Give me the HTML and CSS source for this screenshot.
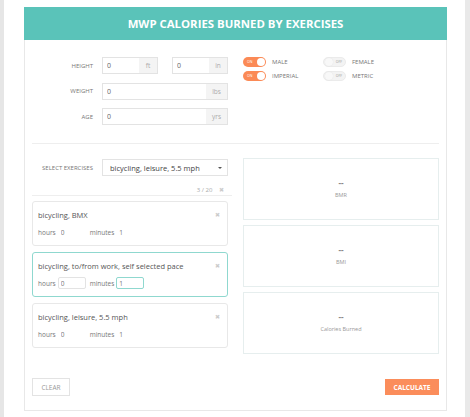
FILE: index.html
```html
<!DOCTYPE html>
<html lang="en">
<head>
  <meta charset="UTF-8">
  <meta name="viewport" content="width=device-width, initial-scale=1.0">
  <title>MWP Calories Burned by Exercises</title>
  <link rel="stylesheet" href="styles.css">
</head>
<body>
  <div class="edge-left"></div>
  <div class="main">
    <div class="calc">
      <header class="calc-header">
        <h1>MWP Calories Burned by Exercises</h1>
      </header>

      <div class="calc-body">
        <div class="top-section">
          <div class="measures">
            <div class="form-row">
              <label>Height</label>
              <div class="input-group short">
                <input type="text" value="0">
                <span class="addon">ft</span>
              </div>
              <div class="input-group short">
                <input type="text" value="0">
                <span class="addon">in</span>
              </div>
            </div>
            <div class="form-row">
              <label>Weight</label>
              <div class="input-group wide">
                <input type="text" value="0">
                <span class="addon">lbs</span>
              </div>
            </div>
            <div class="form-row">
              <label>Age</label>
              <div class="input-group wide">
                <input type="text" value="0">
                <span class="addon">yrs</span>
              </div>
            </div>
          </div>

          <div class="switches">
            <div class="switch-row">
              <div class="switch-item">
                <span class="toggle on"><span class="toggle-text">ON</span><span class="knob"></span></span>
                <span class="switch-label">Male</span>
              </div>
              <div class="switch-item">
                <span class="toggle off"><span class="knob"></span><span class="toggle-text">OFF</span></span>
                <span class="switch-label">Female</span>
              </div>
            </div>
            <div class="switch-row">
              <div class="switch-item">
                <span class="toggle on"><span class="toggle-text">ON</span><span class="knob"></span></span>
                <span class="switch-label">Imperial</span>
              </div>
              <div class="switch-item">
                <span class="toggle off"><span class="knob"></span><span class="toggle-text">OFF</span></span>
                <span class="switch-label">Metric</span>
              </div>
            </div>
          </div>
        </div>

        <div class="lower-section">
          <div class="exercises">
            <div class="form-row">
              <label>Select Exercises</label>
              <div class="select-box">
                <span>bicycling, leisure, 5.5 mph</span>
                <span class="caret"></span>
              </div>
            </div>
            <div class="count-row">3 / 20 <span class="remove">&#10006;</span></div>

            <div id="exercise-list" class="exercise-list"></div>
          </div>

          <div class="results">
            <div class="result-box">
              <div class="result-value">--</div>
              <div class="result-label">BMR</div>
            </div>
            <div class="result-box">
              <div class="result-value">--</div>
              <div class="result-label">BMI</div>
            </div>
            <div class="result-box">
              <div class="result-value">--</div>
              <div class="result-label">Calories Burned</div>
            </div>
          </div>
        </div>

        <div class="calc-footer">
          <button class="btn-clear">Clear</button>
          <button class="btn-calc">Calculate</button>
        </div>
      </div>
    </div>
  </div>
  <div class="edge-right"></div>

  <script>
    const exercises = [
      { name: "bicycling, BMX", hours: 0, minutes: 1 },
      { name: "bicycling, to/from work, self selected pace", hours: 0, minutes: 1, editing: true },
      { name: "bicycling, leisure, 5.5 mph", hours: 0, minutes: 1 }
    ];

    function renderExercises() {
      const list = document.getElementById('exercise-list');
      list.innerHTML = '';
      exercises.forEach(ex => {
        const item = document.createElement('div');
        item.className = 'exercise-item' + (ex.editing ? ' active' : '');
        item.innerHTML = `
          <div class="exercise-title">${ex.name}<span class="remove">&#10006;</span></div>
          <div class="exercise-time">
            <span>hours</span>
            <input type="text" class="time-input" value="${ex.hours}">
            <span>minutes</span>
            <input type="text" class="time-input${ex.editing ? ' focus' : ''}" value="${ex.minutes}">
          </div>
        `;
        list.appendChild(item);
      });
    }

    renderExercises();
  </script>
</body>
</html>
```

FILE: styles.css
```css
body {
  font-family: "Open Sans", Arial, sans-serif;
  background-color: #fff;
  margin: 0;
  padding: 0;
  display: flex;
  min-height: 100vh;
  color: #666;
}

.edge-left {
  width: 4px;
  background-color: #e6e6e6;
}

.edge-right {
  width: 5px;
  background-color: #e9e9e9;
}

.main {
  flex: 1;
  padding: 7px 18px 0 20px;
}

.calc {
  border: 1px solid #e8e8e8;
  border-top: none;
}

.calc-header {
  background-color: #5ac3b9;
  height: 33px;
  margin: 0 -1px;
  display: flex;
  align-items: center;
  justify-content: center;
}

.calc-header h1 {
  margin: 0;
  color: #fff;
  font-size: 11.4px;
  font-weight: 700;
  text-transform: uppercase;
}

.calc-body {
  padding: 17px 7px 14px 7px;
}

.top-section,
.lower-section {
  display: grid;
  grid-template-columns: 200px 1fr;
  column-gap: 11px;
}

.top-section {
  padding-bottom: 18px;
  border-bottom: 1px solid #eee;
}

.measures {
  display: flex;
  flex-direction: column;
  gap: 8.5px;
}

.form-row {
  display: flex;
  align-items: center;
  height: 17px;
}

.form-row label {
  flex-shrink: 0;
  box-sizing: border-box;
  width: 70px;
  padding-right: 9px;
  text-align: right;
  font-size: 6px;
  text-transform: uppercase;
  color: #777;
}

.input-group {
  display: flex;
  flex-shrink: 0;
  height: 17px;
  border: 1px solid #e3e3e3;
  box-sizing: border-box;
}

.input-group.short {
  width: 56px;
}

.input-group.short + .input-group.short {
  margin-left: 14px;
}

.input-group.wide {
  width: 126px;
}

.input-group input {
  flex: 1;
  min-width: 0;
  border: none;
  outline: none;
  padding: 0 4px;
  font-family: inherit;
  font-size: 7px;
  color: #666;
}

.input-group .addon {
  width: 18px;
  background-color: #f4f4f4;
  font-size: 6.5px;
  color: #aaa;
  display: flex;
  align-items: center;
  justify-content: center;
}

.input-group.wide .addon {
  width: 21px;
}

.switches {
  display: flex;
  flex-direction: column;
  gap: 4px;
}

.switch-row {
  display: flex;
}

.switch-item {
  width: 80px;
  display: flex;
  align-items: center;
  gap: 6px;
}

.toggle {
  width: 23px;
  height: 10px;
  border-radius: 5px;
  box-sizing: border-box;
  display: flex;
  align-items: center;
  justify-content: space-between;
  padding: 0 1px;
}

.toggle.on {
  background-color: #fb8a56;
  padding-left: 4px;
}

.toggle.off {
  background-color: #f3f3f3;
  border: 1px solid #ebebeb;
  padding-right: 3px;
}

.knob {
  width: 8px;
  height: 8px;
  border-radius: 50%;
  background-color: #fff;
}

.toggle.off .knob {
  background-color: #f8f8f8;
  box-shadow: 0 0 1px #ddd;
}

.toggle-text {
  font-size: 3.5px;
  color: #fff;
  line-height: 1;
}

.toggle.off .toggle-text {
  color: #999;
}

.switch-label {
  font-size: 6px;
  text-transform: uppercase;
  color: #777;
}

.lower-section {
  padding-top: 14px;
}

.exercises .form-row {
  margin-top: 1px;
}

.select-box {
  flex-shrink: 0;
  width: 126px;
  height: 17px;
  box-sizing: border-box;
  border: 1px solid #e3e3e3;
  display: flex;
  align-items: center;
  justify-content: space-between;
  padding: 0 5px 0 7px;
  font-size: 7.5px;
  color: #444;
}

.caret {
  width: 0;
  height: 0;
  border-left: 2px solid transparent;
  border-right: 2px solid transparent;
  border-top: 2.5px solid #555;
}

.count-row {
  margin-top: 10px;
  height: 9px;
  line-height: 9px;
  border-bottom: 1px solid #eee;
  text-align: right;
  padding-right: 8px;
  font-size: 6px;
  color: #aaa;
}

.count-row .remove {
  margin-left: 5px;
}

.remove {
  font-size: 6px;
  color: #ccc;
}

.exercise-list {
  margin-top: 5px;
  width: 196px;
  display: flex;
  flex-direction: column;
  gap: 6px;
}

.exercise-item {
  border: 1px solid #e8e8e8;
  border-radius: 3px;
  padding: 7px 5px;
}

.exercise-item.active {
  border-color: #8fd8cf;
}

.exercise-title {
  display: flex;
  justify-content: space-between;
  align-items: center;
  height: 11px;
  font-size: 7.5px;
  color: #555;
  padding-right: 2px;
}

.exercise-time {
  margin-top: 6px;
  display: flex;
  align-items: center;
  height: 12px;
  font-size: 6.5px;
  color: #777;
}

.time-input {
  width: 28px;
  height: 12px;
  box-sizing: border-box;
  border: 1px solid transparent;
  border-radius: 2px;
  padding: 0 2px;
  margin: 0 4px 0 2px;
  font-family: inherit;
  font-size: 6.5px;
  color: #777;
  outline: none;
  background: transparent;
}

.exercise-item.active .time-input {
  border-color: #e3e3e3;
}

.exercise-item.active .time-input.focus {
  border-color: #8fd8cf;
}

.results {
  display: flex;
  flex-direction: column;
  gap: 5px;
}

.result-box {
  height: 62px;
  box-sizing: border-box;
  border: 1px solid #e6eeee;
  display: flex;
  flex-direction: column;
  align-items: center;
  justify-content: center;
  gap: 2px;
}

.result-value {
  font-size: 8px;
  font-weight: 700;
  color: #888;
  line-height: 10px;
}

.result-label {
  font-size: 5.5px;
  color: #999;
  line-height: 10px;
}

.calc-footer {
  margin-top: 24px;
  display: flex;
  justify-content: space-between;
  align-items: center;
}

button {
  font-family: inherit;
  text-transform: uppercase;
  cursor: pointer;
}

.btn-clear {
  width: 38px;
  height: 18px;
  background-color: #fff;
  border: 1px solid #e3e3e3;
  font-size: 6.5px;
  color: #999;
  padding: 0;
}

.btn-calc {
  width: 54px;
  height: 16px;
  background-color: #fb8d5b;
  border: none;
  font-size: 6.5px;
  font-weight: 700;
  color: #fff;
  padding: 0;
}
```
